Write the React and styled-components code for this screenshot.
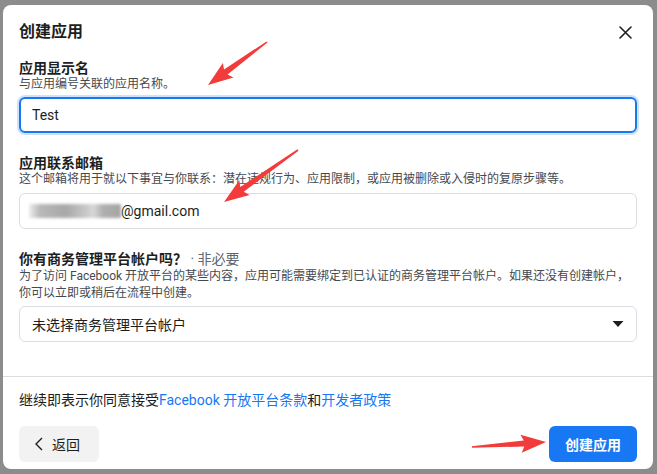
import styled, { createGlobalStyle } from "styled-components";

const GlobalStyle = createGlobalStyle`
  html, body {
    margin: 0;
    padding: 0;
    background: #8c8c8c;
    font-family: Roboto, "Noto Sans CJK SC", "Liberation Sans", sans-serif;
    color: #1c1e21;
  }
`;

const Page = styled.div`
  position: relative;
  width: 657px;
  height: 474px;
  padding: 5px 4px 0 3px;
  box-sizing: border-box;
`;

const Modal = styled.div`
  width: 650px;
  height: 464px;
  background: #ffffff;
  border-radius: 8px;
  display: flex;
  flex-direction: column;
  box-sizing: border-box;
`;

const Header = styled.div`
  display: flex;
  align-items: center;
  justify-content: space-between;
  padding: 15px 20px 0 16px;
  height: 24px;
`;

const Title = styled.h1`
  margin: 0;
  font-size: 16px;
  line-height: 24px;
  font-weight: 700;
`;

const Close = styled.button`
  border: none;
  background: none;
  padding: 0;
  width: 16px;
  height: 16px;
  display: flex;
  align-items: center;
  justify-content: center;
  cursor: pointer;
`;

const Body = styled.div`
  flex: 1;
  padding: 15px 16px 0;
  display: flex;
  flex-direction: column;
  gap: 21px;
  border-bottom: 1px solid #dadde1;
`;

const Field = styled.div`
  display: flex;
  flex-direction: column;
`;

const Label = styled.div`
  font-size: 14px;
  line-height: 18px;
  font-weight: 700;
`;

const Optional = styled.span`
  font-weight: 400;
  color: #606770;
`;

const Hint = styled.div`
  font-size: 12px;
  line-height: ${({ lh }) => lh || "15px"};
  color: #444950;
  margin-bottom: ${({ mb }) => mb || "5px"};
`;

const Input = styled.div`
  height: 36px;
  box-sizing: border-box;
  border-radius: 6px;
  border: ${({ focused }) =>
    focused ? "2px solid #1877f2" : "1px solid #dadde1"};
  box-shadow: ${({ focused }) => (focused ? "0 0 0 2px #cfe2fc" : "none")};
  padding: 0 ${({ focused }) => (focused ? "11px" : "12px")};
  display: flex;
  align-items: center;
  justify-content: space-between;
  font-size: 14px;
`;

const Email = styled.span`
  display: flex;
  align-items: center;
  margin-left: -3px;
`;

const Blur = styled.span`
  display: inline-block;
  width: 92px;
  height: 14px;
  background: linear-gradient(
    90deg,
    #ececec 0%,
    #b8b8b8 12%,
    #a8a8a8 40%,
    #c8c8c8 62%,
    #d8d8d8 70%,
    #b0b0b0 80%,
    #a4a4a4 100%
  );
  filter: blur(1.5px);
`;

const Footer = styled.div`
  padding: 14px 16px 7px;
  display: flex;
  flex-direction: column;
  gap: 17px;
`;

const Terms = styled.div`
  font-size: 14px;
  line-height: 18px;
`;

const Link = styled.a`
  color: #1877f2;
  text-decoration: none;
`;

const Buttons = styled.div`
  display: flex;
  justify-content: space-between;
  align-items: center;
`;

const Button = styled.button`
  height: 36px;
  border: none;
  border-radius: 6px;
  font-family: inherit;
  font-size: 14px;
  display: flex;
  align-items: center;
  justify-content: center;
  gap: 8px;
  cursor: pointer;
  padding: ${({ primary }) => (primary ? "0 16px" : "0 16px 0 12px")};
  background: ${({ primary }) => (primary ? "#1877f2" : "#f2f2f2")};
  color: ${({ primary }) => (primary ? "#ffffff" : "#1c1e21")};
  font-weight: ${({ primary }) => (primary ? 700 : 400)};
  width: ${({ primary }) => (primary ? "88px" : "80px")};
`;

const Overlay = styled.svg`
  position: absolute;
  left: 0;
  top: 0;
  pointer-events: none;
`;

function arrowPoints(x1, y1, x2, y2) {
  const dx = x2 - x1;
  const dy = y2 - y1;
  const len = Math.hypot(dx, dy);
  const ux = dx / len;
  const uy = dy / len;
  const nx = -uy;
  const ny = ux;
  const head = 22;
  const bx = x2 - ux * head;
  const by = y2 - uy * head;
  const pt = (x, y, w) => [x + nx * w, y + ny * w];
  const pts = [
    pt(x1, y1, 0.8),
    pt(bx, by, 3),
    pt(bx - ux * 3, by - uy * 3, 9),
    [x2, y2],
    pt(bx - ux * 3, by - uy * 3, -9),
    pt(bx, by, -3),
    pt(x1, y1, -0.8),
  ];
  return pts.map((p) => p.map((v) => v.toFixed(1)).join(",")).join(" ");
}

const arrows = [
  [267, 42, 208, 85],
  [298, 150, 224, 202],
  [472, 447, 546, 442],
];

export default function App() {
  return (
    <>
      <GlobalStyle />
      <Page>
        <Modal>
          <Header>
            <Title>创建应用</Title>
            <Close aria-label="关闭">
              <svg width="13" height="13" viewBox="0 0 13 13">
                <path
                  d="M1 1 L12 12 M12 1 L1 12"
                  stroke="#1c1e21"
                  strokeWidth="1.6"
                  strokeLinecap="round"
                />
              </svg>
            </Close>
          </Header>

          <Body>
            <Field>
              <Label>应用显示名</Label>
              <Hint>与应用编号关联的应用名称。</Hint>
              <Input focused>Test</Input>
            </Field>

            <Field>
              <Label>应用联系邮箱</Label>
              <Hint mb="6px">
                这个邮箱将用于就以下事宜与你联系：潜在违规行为、应用限制，或应用被删除或入侵时的复原步骤等。
              </Hint>
              <Input>
                <Email>
                  <Blur />
                  @gmail.com
                </Email>
              </Input>
            </Field>

            <Field>
              <Label>
                你有商务管理平台帐户吗？ <Optional>· 非必要</Optional>
              </Label>
              <Hint lh="17px" mb="4px">
                为了访问 Facebook 开放平台的某些内容，应用可能需要绑定到已认证的商务管理平台帐户。如果还没有创建帐户，
                <br />
                你可以立即或稍后在流程中创建。
              </Hint>
              <Input>
                未选择商务管理平台帐户
                <svg width="12" height="8" viewBox="0 0 12 8">
                  <path d="M0.5 1 L11.5 1 L6 7 Z" fill="#1c1e21" />
                </svg>
              </Input>
            </Field>
          </Body>

          <Footer>
            <Terms>
              继续即表示你同意接受<Link href="#">Facebook 开放平台条款</Link>和
              <Link href="#">开发者政策</Link>
            </Terms>
            <Buttons>
              <Button>
                <svg width="10" height="14" viewBox="0 0 10 14">
                  <path
                    d="M8 1 L2 7 L8 13"
                    stroke="#1c1e21"
                    strokeWidth="1.4"
                    fill="none"
                  />
                </svg>
                返回
              </Button>
              <Button primary>创建应用</Button>
            </Buttons>
          </Footer>
        </Modal>

        <Overlay width="657" height="474" viewBox="0 0 657 474">
          {arrows.map((a, i) => (
            <polygon key={i} points={arrowPoints(...a)} fill="#f23b3b" />
          ))}
        </Overlay>
      </Page>
    </>
  );
}
